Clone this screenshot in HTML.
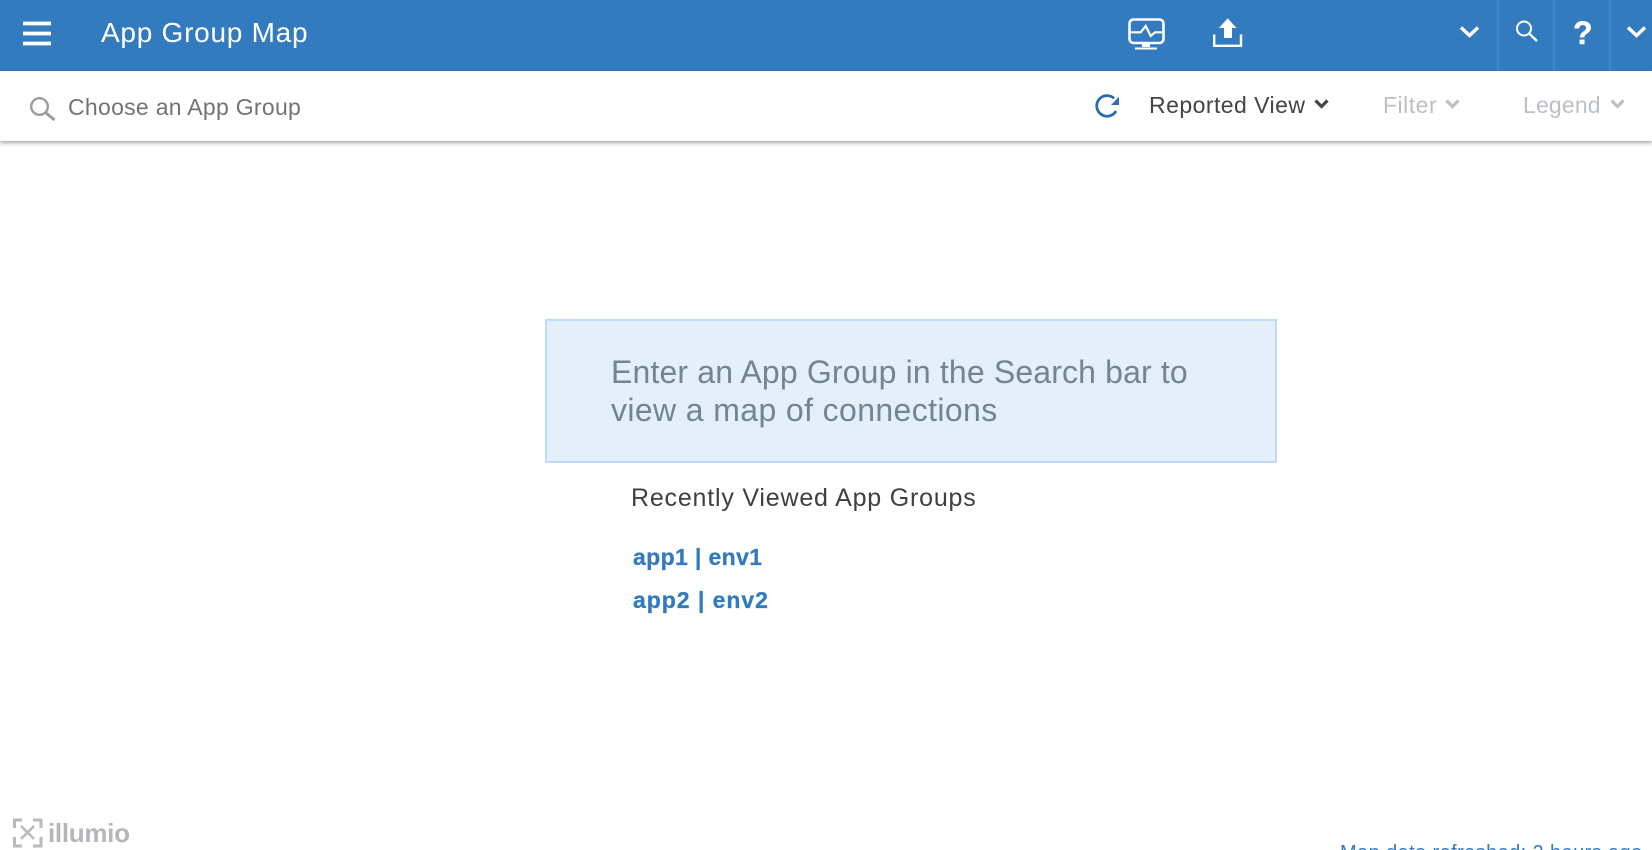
<!DOCTYPE html>
<html><head><meta charset="utf-8"><style>
html,body{margin:0;padding:0;width:1652px;height:850px;overflow:hidden;background:#fff;font-family:"Liberation Sans",sans-serif}
#w{position:relative;width:1652px;height:850px;overflow:hidden}
.a{position:absolute;white-space:nowrap;line-height:1}
svg{position:absolute;overflow:visible}
</style></head><body><div id="w">
<div class="a" style="left:0;top:0;width:1652px;height:71px;background:#337bbf"></div>
<div class="a" style="left:0;top:71px;width:1652px;height:70px;background:#fff;box-shadow:0 2px 4px rgba(0,0,0,.35)"></div>
<div class="a" style="left:1497px;top:0;width:2px;height:71px;background:#3f88cf"></div>
<div class="a" style="left:1553px;top:0;width:2px;height:71px;background:#3f88cf"></div>
<div class="a" style="left:1609px;top:0;width:2px;height:71px;background:#3f88cf"></div>

<svg style="left:0;top:0" width="60" height="71"><path d="M23 23.500H51M23 33.500H51M23 43.500H51" stroke="#fff" stroke-width="3.800" fill="none"/></svg>
<div class="a" style="left:101px;top:19px;font-size:28px;color:#fff;letter-spacing:.74px">App Group Map</div>

<svg style="left:1127px;top:17px" width="40" height="34" fill="none" stroke="#fff"><rect x="2.500" y="2.500" width="34" height="23.500" rx="4" stroke-width="2.600"/><path d="M3.700 15.300H13.700L18.700 9L23.700 19L28 15.300H35" stroke-width="2.200"/><path d="M15 27H23V30H15ZM8 30.500H30V32.500H8Z" fill="#fff" stroke="none"/></svg>
<svg style="left:1210px;top:17px" width="34" height="32"><path d="M17.700 1.300L26.500 11H22V21H14V11H9Z" fill="#fff"/><path d="M4.200 17.500V28.800H31V17.500" fill="none" stroke="#fff" stroke-width="2.400"/></svg>
<svg style="left:1458px;top:24px" width="24" height="16"><path d="M3 3.500L11.500 11.500L20 3.500" fill="none" stroke="#fff" stroke-width="3.400"/></svg>
<svg style="left:1512px;top:18px" width="30" height="28" fill="none" stroke="#fff"><circle cx="12" cy="10.500" r="7" stroke-width="2"/><path d="M17 15.500L25 23" stroke-width="2.400"/></svg>
<div class="a" style="left:1573px;top:17px;font-size:32px;font-weight:bold;color:#fff;-webkit-text-stroke:.4px #fff">?</div>
<svg style="left:1625px;top:24px" width="24" height="16"><path d="M3 3.500L11.500 11.500L20 3.500" fill="none" stroke="#fff" stroke-width="3.400"/></svg>

<svg style="left:28px;top:94px" width="30" height="30" fill="none" stroke="#9b9ca0"><circle cx="11.500" cy="12.500" r="8.300" stroke-width="2.400"/><path d="M17.500 18.500L26.500 26" stroke-width="3"/></svg>
<div class="a" style="left:68px;top:96px;font-size:23px;color:#737373;letter-spacing:.29px">Choose an App Group</div>

<svg style="left:1094px;top:92px" width="28" height="28" fill="none" stroke="#2b6cb0" stroke-width="2.800"><path d="M20 6.300A10.300 10.300 0 1 0 22 19"/><path d="M25 4.700V13H17Z" fill="#2b6cb0" stroke="none"/></svg>
<div class="a" style="left:1149px;top:94px;font-size:23px;color:#444;letter-spacing:.46px">Reported View</div>
<svg style="left:1314px;top:98px" width="18" height="14"><path d="M1.500 2.500L7.500 8.500L13.500 2.500" fill="none" stroke="#444" stroke-width="3.200"/></svg>
<div class="a" style="left:1383px;top:94px;font-size:23px;color:#bcc0c5;letter-spacing:.5px">Filter</div>
<svg style="left:1445px;top:98px" width="18" height="14"><path d="M1.500 2.500L7.500 8.500L13.500 2.500" fill="none" stroke="#bcc0c5" stroke-width="3.200"/></svg>
<div class="a" style="left:1523px;top:94px;font-size:23px;color:#bcc0c5;letter-spacing:.17px">Legend</div>
<svg style="left:1610px;top:98px" width="18" height="14"><path d="M1.500 2.500L7.500 8.500L13.500 2.500" fill="none" stroke="#bcc0c5" stroke-width="3.200"/></svg>

<div class="a" style="left:545px;top:319px;width:728px;height:140px;background:#e4eff9;border:2px solid #bcdcf8"></div>
<div class="a" style="left:611px;top:356px;font-size:32px;color:#738494;letter-spacing:.15px">Enter an App Group in the Search bar to</div>
<div class="a" style="left:611px;top:394px;font-size:32px;color:#738494;letter-spacing:.38px">view a map of connections</div>
<div class="a" style="left:631px;top:486px;font-size:25px;color:#404040;letter-spacing:.8px">Recently Viewed App Groups</div>
<div class="a" style="left:633px;top:546px;font-size:23px;font-weight:bold;color:#337bbf;letter-spacing:.37px;-webkit-text-stroke:.3px #337bbf">app1 | env1</div>
<div class="a" style="left:633px;top:589px;font-size:23px;font-weight:bold;color:#337bbf;letter-spacing:.96px;-webkit-text-stroke:.3px #337bbf">app2 | env2</div>

<svg style="left:13px;top:817px" width="32" height="32" fill="none" stroke="#b8babd" stroke-width="3"><path d="M9 3H1.500V11M1.500 20V29H9M20 3H28V11M28 20V29H20"/><path d="M8 9L21 22M21 9L8 22" stroke-width="2.600"/></svg>
<div class="a" style="left:48px;top:820px;font-size:26px;font-weight:bold;color:#b4b6b9;letter-spacing:-.3px">illumio</div>
<div class="a" style="left:1340px;top:843px;font-size:20px;color:#337bbf;letter-spacing:.4px">Map data refreshed: 2 hours ago</div>
</div></body></html>
